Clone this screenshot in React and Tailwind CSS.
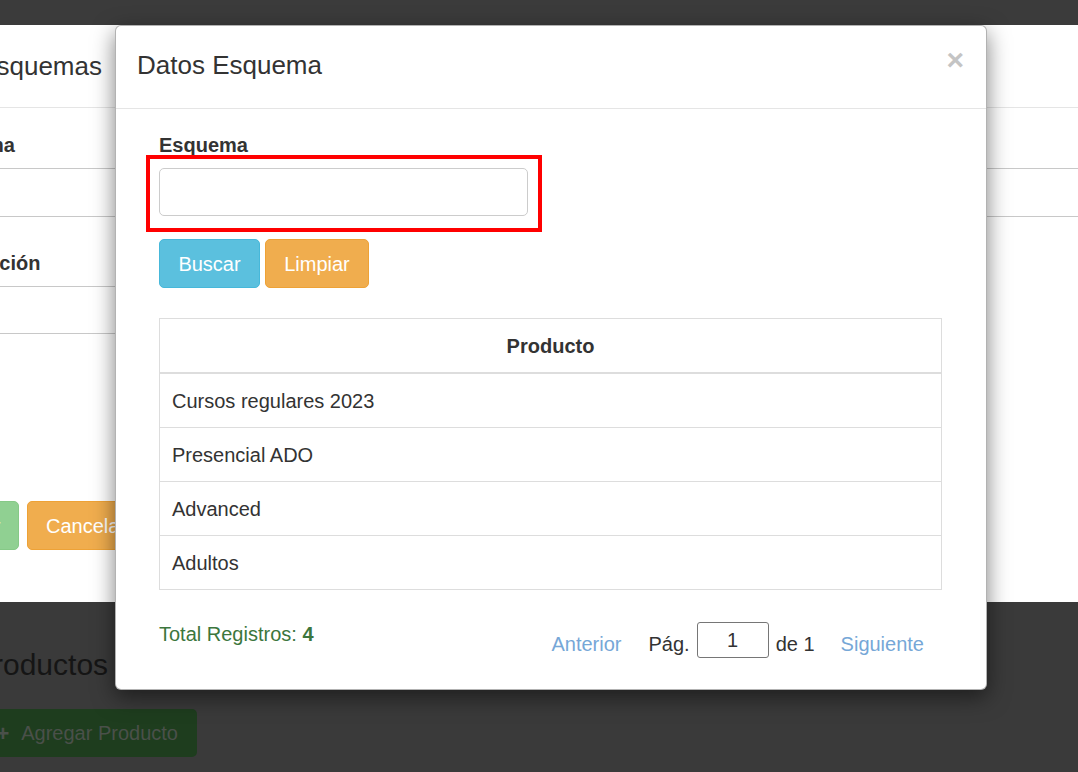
import React from 'react';

const rows = ['Cursos regulares 2023', 'Presencial ADO', 'Advanced', 'Adultos'];

const App = () => {
  return (
    <div className="relative w-[1078px] h-[772px] overflow-hidden bg-[#3a3a3a] font-['Liberation_Sans',Arial,sans-serif] text-[#333]">
      {/* underlying modal (Datos Esquemas) */}
      <div className="h-[25px] bg-[#3b3b3b]" />
      <div className="h-[577px] bg-white overflow-hidden">
        <div className="-ml-[118px] w-[1400px]">
          <div className="h-[83px] border-b border-[#e5e5e5] pl-[22px] flex items-center">
            <span className="text-[26px] whitespace-nowrap">Datos Esquemas</span>
          </div>
          <div className="pl-[44px] pt-[23px]">
            <div className="text-[20px] leading-[28px] font-bold">Esquema</div>
            <div className="mt-[9px] h-[49px] w-full border border-[#c8c8c8] rounded-[5px]" />
            <div className="mt-[32px] text-[20px] leading-[28px] font-bold">Descripción</div>
            <div className="mt-[9px] h-[48px] w-[900px] border border-[#c8c8c8] rounded-[5px]" />
            <div className="mt-[167px] -ml-[18px] flex gap-[8px]">
              <div className="w-[111px] h-[49px] rounded-[5px] bg-[#90d092] border border-[#86c987] text-white text-[20px] flex items-center px-[18px]">Guardar</div>
              <div className="h-[49px] rounded-[5px] bg-[#f0ad4e] border border-[#eea236] text-white text-[20px] flex items-center px-[18px]">Cancelar</div>
            </div>
          </div>
        </div>
      </div>

      {/* dimmed page below */}
      <div className="-ml-[27px]">
        <div className="mt-[46px] text-[30px] leading-[34px] text-[#151515] whitespace-nowrap">Productos</div>
        <div className="mt-[27px] ml-[-20px] w-[244px] h-[48px] rounded-[5px] bg-[#1e3d1e] flex items-center justify-end pr-[19px] gap-[12px] text-[20px] text-[#4a504a]">
          <span className="font-bold text-[22px]">+</span>
          <span className="whitespace-nowrap">Agregar Producto</span>
        </div>
      </div>

      {/* modal */}
      <div className="absolute left-[115px] top-[25px] w-[872px] h-[665px] bg-white border border-black/30 rounded-[6px] shadow-[0_7px_22px_rgba(0,0,0,0.5)]">
        <div className="h-[83px] border-b border-[#e5e5e5] pl-[21px] pr-[22px] flex items-center justify-between">
          <h4 className="mb-[4px] text-[26px] text-[#333]">Datos Esquema</h4>
          <button className="mb-[14px] text-[30px] leading-none font-bold text-[#c4c4c4]">×</button>
        </div>
        <div className="pl-[43px] pt-[22px]">
          <label className="block text-[20px] leading-[28px] font-bold">Esquema</label>
          <input className="mt-[9px] block w-[369px] h-[48px] border border-[#ccc] rounded-[5px] px-[17px] text-[20px] outline-none" />
          <div className="mt-[23px] flex gap-[5px]">
            <button className="w-[101px] h-[49px] rounded-[5px] bg-[#5bc0de] border border-[#46b8da] text-white text-[20px]">Buscar</button>
            <button className="w-[104px] h-[49px] rounded-[5px] bg-[#f0ad4e] border border-[#eea236] text-white text-[20px]">Limpiar</button>
          </div>
          <div className="mt-[30px] w-[783px] border border-[#ddd]">
            <div className="h-[55px] border-b-2 border-[#ddd] flex items-center justify-center text-[20px] font-bold">Producto</div>
            {rows.map((r, i) => (
              <div key={r} className={`flex items-center pl-[12px] text-[20px] ${i < rows.length - 1 ? 'h-[54px] border-b border-[#ddd]' : 'h-[53px]'}`}>
                {r}
              </div>
            ))}
          </div>
          <div className="mt-[30px] w-[783px] flex justify-between items-start">
            <div className="text-[20px] leading-[28px] text-[#3c763d]">
              Total Registros: <span className="font-bold">4</span>
            </div>
            <div className="mt-[2px] mr-[18px] flex items-start text-[20px]">
              <span className="mt-[8px] leading-[28px] text-[#76a7d7]">Anterior</span>
              <span className="mt-[8px] ml-[27px] leading-[28px]">Pág.</span>
              <input defaultValue="1" className="ml-[7px] w-[72px] h-[36px] border border-[#767676] rounded-[3px] text-center text-[20px] outline-none" />
              <span className="mt-[8px] ml-[7px] leading-[28px]">de 1</span>
              <span className="mt-[8px] ml-[26px] leading-[28px] text-[#76a7d7]">Siguiente</span>
            </div>
          </div>
        </div>
      </div>

      {/* annotation */}
      <div className="absolute left-[146px] top-[155px] w-[396px] h-[77px] border-4 border-[#ff0000]" />
    </div>
  );
};

export default App;
